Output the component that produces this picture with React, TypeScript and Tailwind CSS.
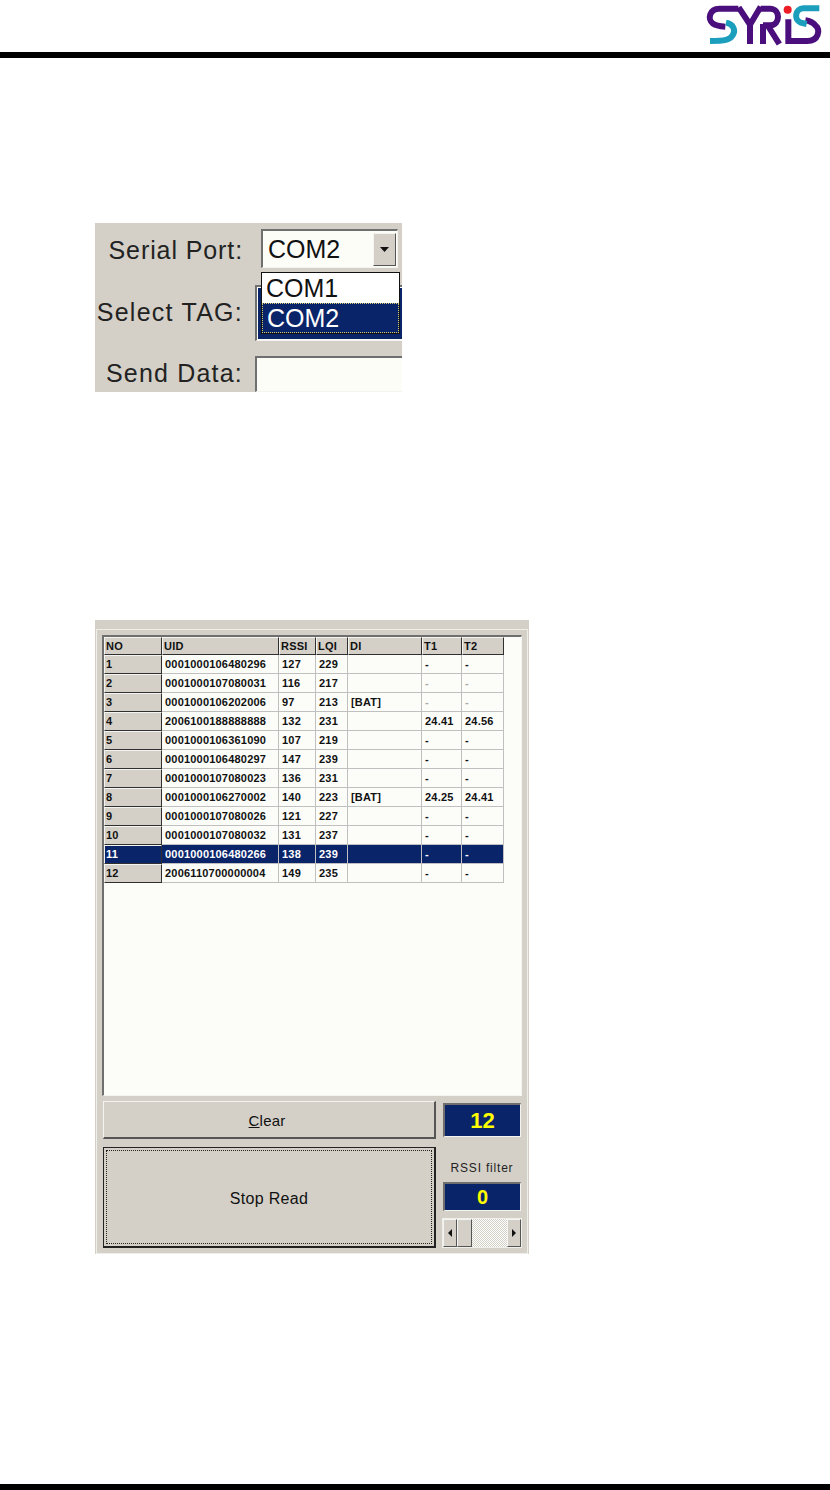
import React from "react";

type Row = { no: string; uid: string; rssi: string; lqi: string; di?: string; t1?: string; t2?: string; faint?: boolean; sel?: boolean };

const rows: Row[] = [
  { no: "1", uid: "0001000106480296", rssi: "127", lqi: "229" },
  { no: "2", uid: "0001000107080031", rssi: "116", lqi: "217", faint: true },
  { no: "3", uid: "0001000106202006", rssi: "97", lqi: "213", di: "[BAT]", faint: true },
  { no: "4", uid: "2006100188888888", rssi: "132", lqi: "231", t1: "24.41", t2: "24.56" },
  { no: "5", uid: "0001000106361090", rssi: "107", lqi: "219" },
  { no: "6", uid: "0001000106480297", rssi: "147", lqi: "239" },
  { no: "7", uid: "0001000107080023", rssi: "136", lqi: "231" },
  { no: "8", uid: "0001000106270002", rssi: "140", lqi: "223", di: "[BAT]", t1: "24.25", t2: "24.41" },
  { no: "9", uid: "0001000107080026", rssi: "121", lqi: "227" },
  { no: "10", uid: "0001000107080032", rssi: "131", lqi: "237" },
  { no: "11", uid: "0001000106480266", rssi: "138", lqi: "239", sel: true },
  { no: "12", uid: "2006110700000004", rssi: "149", lqi: "235" },
];

const cols = "grid grid-cols-[58px_117px_37px_32px_74px_40px_42px]";

function Logo() {
  return (
    <svg width="140" height="52" viewBox="0 0 420 156" fill="none" strokeWidth="18" className="block">
      <path d="M145 26 H88 C58 26 52 58 68 70 C78 78 92 79 106 80" stroke="#4b0f7d" />
      <path d="M108 68 C130 72 138 90 128 106 C120 120 105 123 60 123" stroke="#1c9fbd" />
      <path d="M146 22 L180 74 L212 20 M180 70 V132" stroke="#4b0f7d" />
      <path d="M212 26 H240 C272 26 272 76 240 76 H219 M219 72 V132 M234 78 L268 132" stroke="#4b0f7d" />
      <path d="M295 58 V123 H352 C386 123 392 90 376 76 C368 67 358 63 346 61" stroke="#4b0f7d" />
      <circle cx="293" cy="29" r="12" fill="#ee1c25" />
      <path d="M388 25 H340 C316 25 310 60 332 68 L350 72" stroke="#1c9fbd" />
    </svg>
  );
}

function Sunken({ className, children }: { className: string; children?: React.ReactNode }) {
  return (
    <div className={"border-t-2 border-l-2 border-r border-b border-t-[#6f6f6f] border-l-[#6f6f6f] border-r-[#f4f4f0] border-b-[#f4f4f0] " + className}>
      {children}
    </div>
  );
}

function PortPanel() {
  const label = "w-[148px] shrink-0 whitespace-nowrap text-right text-[25px] text-[#222] leading-none";
  return (
    <div className="relative w-[307px] h-[169px] ml-[95px] mt-[165px] bg-[#d4d0c8] overflow-hidden flex flex-col pt-[6px]">
      <div className="flex items-center h-[39px]">
        <div className={label + " tracking-[0.9px] pt-[4px]"}>Serial Port:</div>
        <Sunken className="ml-[18px] w-[137px] h-[39px] bg-[#fdfdf8] flex items-center justify-between">
          <span className="ml-[5px] text-[25px] leading-none text-[#111]">COM2</span>
          <div className="w-[23px] h-[33px] mr-[1px] bg-[#d4d0c8] border border-t-[#f4f4f0] border-l-[#f4f4f0] border-r-[#555] border-b-[#555] flex items-center justify-center">
            <svg width="9" height="5" viewBox="0 0 9 5"><path d="M0 0H9L4.5 5Z" fill="#111" /></svg>
          </div>
        </Sunken>
      </div>
      <div className="flex items-center h-[56px] mt-[17px]">
        <div className={label + " tracking-[1.25px] pb-[2px]"}>Select TAG:</div>
        <Sunken className="ml-[12px] w-[160px] h-[56px] shrink-0 bg-[#fdfdf8] p-[1px]">
          <div className="h-full w-full bg-[#0a246a]" />
        </Sunken>
      </div>
      <div className="flex items-center h-[36px] mt-[15px]">
        <div className={label + " tracking-[1.2px] pb-[2px]"}>Send Data:</div>
        <Sunken className="ml-[12px] w-[160px] h-[36px] shrink-0 bg-[#fdfdf8]" />
      </div>
      <div className="absolute left-[166px] top-[49px] w-[139px] h-[62px] border border-[#111] bg-white flex flex-col text-[25px] leading-none">
        <div className="h-[30px] flex items-center pl-[4px] text-[#111]">COM1</div>
        <div className="h-[30px] flex items-center pl-[4px] bg-[#0a246a] text-white border border-dotted border-[#d8d070]">COM2</div>
      </div>
    </div>
  );
}

function HeaderCell({ children, sel, h = "h-[19px]" }: { children: React.ReactNode; sel?: boolean; h?: string }) {
  return (
    <div
      className={
        "border border-t-[#f4f4f0] border-l-[#f4f4f0] border-r-[#303030] border-b-[#303030] pl-[1px] flex items-center text-[11px] font-bold tracking-[0.2px] leading-none " +
        h + " " +
        (sel ? "bg-[#0a246a] text-white" : "bg-[#d4d0c8] text-[#111]")
      }
    >
      {children}
    </div>
  );
}

function Cell({ children, sel, faint }: { children?: React.ReactNode; sel?: boolean; faint?: boolean }) {
  return (
    <div
      className={
        "h-[19px] pl-[3px] border-r border-b border-[#c0c0c0] flex items-center text-[11px] font-bold tracking-[0.2px] leading-none " +
        (sel ? "bg-[#0a246a] text-white" : faint ? "text-[#a8a8a8]" : "text-[#111]")
      }
    >
      {children}
    </div>
  );
}

function Grid() {
  return (
    <Sunken className="ml-[5px] mt-[5px] w-[420px] h-[461px] bg-[#fcfdf9] overflow-hidden">
      <div className={cols}>
        {["NO", "UID", "RSSI", "LQI", "DI", "T1", "T2"].map((h) => (
          <HeaderCell key={h} h="h-[18px]">{h}</HeaderCell>
        ))}
      </div>
      {rows.map((r) => (
        <div key={r.no} className={cols}>
          <HeaderCell sel={r.sel}>{r.no}</HeaderCell>
          <Cell sel={r.sel}>{r.uid}</Cell>
          <Cell sel={r.sel}>{r.rssi}</Cell>
          <Cell sel={r.sel}>{r.lqi}</Cell>
          <Cell sel={r.sel}>{r.di}</Cell>
          <Cell sel={r.sel} faint={!r.t1 && r.faint}>{r.t1 ?? "-"}</Cell>
          <Cell sel={r.sel} faint={!r.t2 && r.faint}>{r.t2 ?? "-"}</Cell>
        </div>
      ))}
    </Sunken>
  );
}

function Counter({ value, className }: { value: string; className: string }) {
  return (
    <Sunken className={"bg-[#0a246a] flex items-center justify-center font-bold text-[#ffff00] leading-none " + className}>
      {value}
    </Sunken>
  );
}

function Scroll() {
  const btn = "bg-[#d4d0c8] border border-t-[#f4f4f0] border-l-[#f4f4f0] border-r-[#555] border-b-[#555] flex items-center justify-center";
  return (
    <div className="flex h-[30px] w-[80px] mt-[7px] -ml-[1px] border border-[#f0f0ea]">
      <div className={btn + " w-[14px]"}>
        <svg width="4" height="8" viewBox="0 0 4 8"><path d="M4 0V8L0 4Z" fill="#111" /></svg>
      </div>
      <div className={btn + " w-[15px]"} />
      <div className="flex-1 bg-[repeating-conic-gradient(#d4d0c8_0_25%,#ffffff_0_50%)] bg-[length:2px_2px]" />
      <div className={btn + " w-[14px]"}>
        <svg width="4" height="8" viewBox="0 0 4 8"><path d="M0 0V8L4 4Z" fill="#111" /></svg>
      </div>
    </div>
  );
}

function ReaderPanel() {
  return (
    <div className="w-[434px] h-[634px] ml-[95px] mt-[228px] bg-[#d4d0c8] pt-[9px]">
      <div className="h-[625px] mx-[1px] border border-[#efefe9]">
        <Grid />
        <div className="flex mt-[5px] ml-[6px]">
          <div className="w-[333px] flex flex-col gap-[8px]">
            <button className="h-[38px] bg-[#d4d0c8] border border-t-[#f4f4f0] border-l-[#f4f4f0] border-r-[#555] border-b-[#555] border-b-2 border-r-2 text-[15px] text-[#111] tracking-[0.2px] pr-[4px] pt-[3px]">
              <span className="underline">C</span>lear
            </button>
            <button className="h-[101px] bg-[#d4d0c8] border border-[#222] border-b-2 border-r-2 p-[2px] text-[16px] tracking-[0.3px] text-[#111]">
              <span className="h-full w-full border border-dotted border-[#222] flex items-center justify-center pt-[3px]">Stop Read</span>
            </button>
          </div>
          <div className="ml-[7px] w-[78px] flex flex-col">
            <Counter value="12" className="mt-[2px] h-[34px] text-[22px]" />
            <div className="h-[45px] pt-[25px] text-center text-[12px] tracking-[0.8px] text-[#222] leading-none whitespace-nowrap font-medium">RSSI filter</div>
            <Counter value="0" className="h-[29px] text-[20px]" />
            <Scroll />
          </div>
        </div>
      </div>
    </div>
  );
}

export default function App() {
  return (
    <div className="w-[830px] h-[1490px] bg-white flex flex-col font-['Liberation_Sans',Arial,sans-serif]">
      <div className="h-[52px] flex justify-end">
        <Logo />
      </div>
      <div className="h-[6px] bg-black" />
      <PortPanel />
      <ReaderPanel />
      <div className="mt-auto h-[6px] bg-black" />
    </div>
  );
}
